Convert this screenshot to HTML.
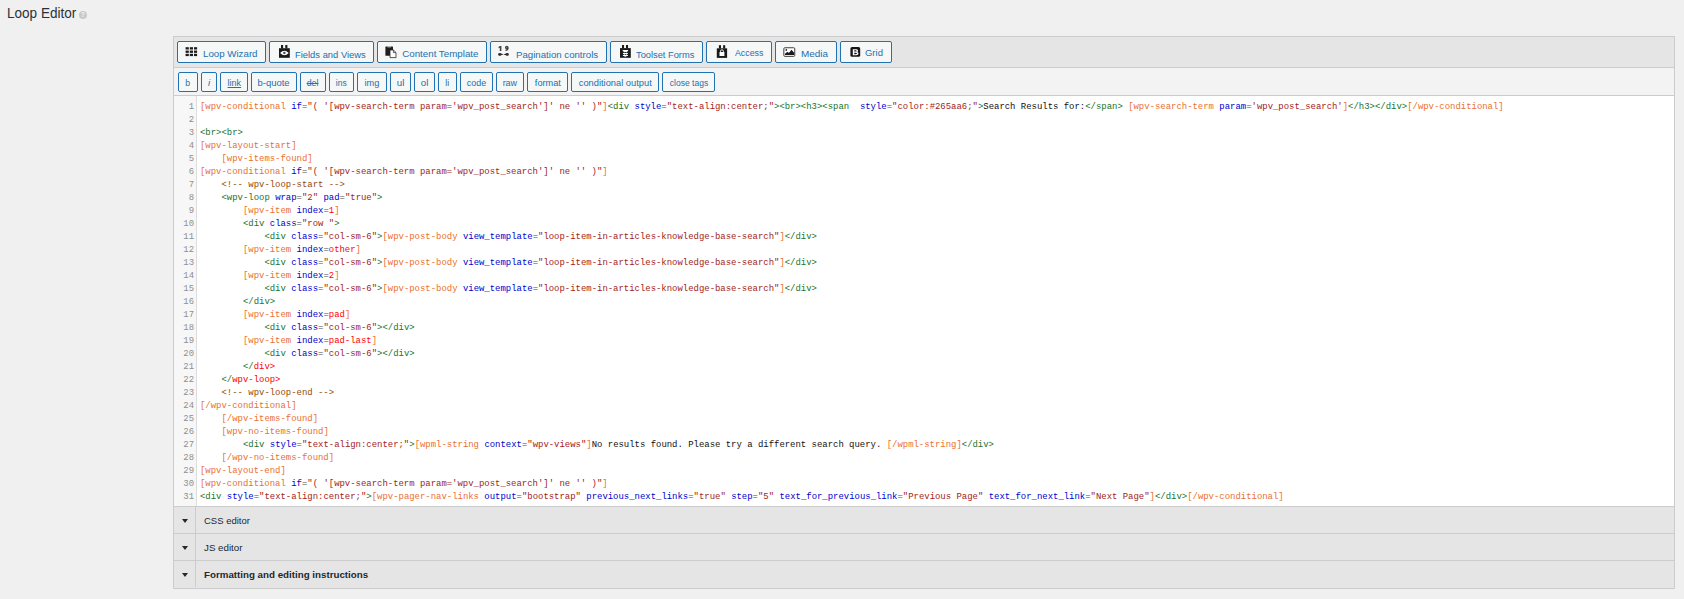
<!DOCTYPE html>
<html>
<head>
<meta charset="utf-8">
<title>Loop Editor</title>
<style>
*{box-sizing:border-box;margin:0;padding:0}
html,body{width:1684px;height:599px;overflow:hidden;background:#f0f0f1}
body{position:relative;font-family:"Liberation Sans",sans-serif;color:#23282d;font-size:9.75px}
.abs{position:absolute}
#title{left:7px;top:3.5px;font-size:13.75px;transform:scaleX(0.985);transform-origin:0 50%;line-height:20px;color:#2a3036;white-space:nowrap}
#help{left:79px;top:11px;width:8px;height:8px;border-radius:50%;background:#c9c9c9;color:#f0f0f1;font-size:7px;line-height:8px;text-align:center;font-weight:bold}
#panel{left:173px;top:36px;width:1502px;height:553px;border:1px solid #ccc;background:#e5e5e5}
#tb1{left:0;top:0;width:1500px;height:30px;background:#e5e5e5;border-bottom:0}
#sep1{left:0;top:30px;width:1500px;height:1px;background:#ccc}
#tb2{left:0;top:31px;width:1500px;height:27px;background:#f3f3f3}
#sep2{left:0;top:58px;width:1500px;height:1px;background:#ccc}
#ed{left:0;top:59px;width:1500px;height:410px;background:#fff;overflow:hidden}
#gut{left:0;top:0;width:23px;height:410px;background:#f7f7f7;border-right:1px solid #ddd}
.btn{position:absolute;border:1px solid #2271b1;border-radius:2px;background:#f6f7f7;color:#2271b1;white-space:nowrap;font-size:9.75px}
.b1{top:4px;height:22px}
.b1 .t{position:absolute;top:5px;line-height:12px;transform-origin:0 50%}
.b2{top:35px;height:20px;text-align:center;line-height:20px}
.q{display:inline-block}
.ln{position:absolute;left:0;height:13px;width:1500px;font-family:"Liberation Mono",monospace;font-size:8.947px;line-height:13px;white-space:pre}
.no{position:absolute;left:0;width:20px;text-align:right;color:#8f8f8f}
.tx{position:absolute;left:26px;color:#111}
.sc{color:#ea7030}.at{color:#00c}.st{color:#a21d18}.tg{color:#22722a}.cm{color:#954a08}.er{color:#f00}.eq{color:#4a4a4a}
.row{left:0;width:1500px;height:26px;background:#e5e5e5}
.row .dv{position:absolute;left:21px;top:0;width:1px;height:100%;background:#ccc}
.row .ar{position:absolute;left:7.5px;top:12px;width:0;height:0;border-left:3.7px solid transparent;border-right:3.7px solid transparent;border-top:4.5px solid #23282d}
.row .lb{position:absolute;left:30px;top:1px;line-height:26px;transform-origin:0 50%;color:#23282d;white-space:nowrap}
.hs{left:0;width:1500px;height:1px;background:#ccc}
</style>
</head>
<body>
<div id="title" class="abs">Loop Editor</div>
<div id="help" class="abs">?</div>

<div id="panel" class="abs">
  <div id="tb1" class="abs"></div>
  <div id="sep1" class="abs"></div>
  <div id="tb2" class="abs"></div>
  <div id="sep2" class="abs"></div>

  <!-- toolbar row 1 -->
  <div class="btn b1" style="left:3px;width:89px"><span class="t" id="t1" style="left:25.4px;top:6px;transform:scaleX(0.996)">Loop Wizard</span></div>
  <div class="btn b1" style="left:95px;width:105px"><span class="t" id="t2" style="left:25.2px;top:7px;transform:scaleX(0.962)">Fields and Views</span></div>
  <div class="btn b1" style="left:203px;width:110px"><span class="t" id="t3" style="left:24.2px;top:6px;transform:scaleX(1.000)">Content Template</span></div>
  <div class="btn b1" style="left:316px;width:117px"><span class="t" id="t4" style="left:25px;top:7px;transform:scaleX(0.990)">Pagination controls</span></div>
  <div class="btn b1" style="left:436px;width:93px"><span class="t" id="t5" style="left:24.6px;top:7px;transform:scaleX(0.952)">Toolset Forms</span></div>
  <div class="btn b1" style="left:532px;width:66px"><span class="t" id="t6" style="left:27.7px;top:5px;transform:scaleX(0.903)">Access</span></div>
  <div class="btn b1" style="left:601px;width:62px"><span class="t" id="t7" style="left:25px;top:5.6px;transform:scaleX(1.020)">Media</span></div>
  <div class="btn b1" style="left:666px;width:52px"><span class="t" id="t8" style="left:24.4px;top:5px;transform:scaleX(0.972)">Grid</span></div>

  <!-- quicktags -->
  <div class="btn b2" style="left:4px;width:20px"><span class="q" style="transform:scaleX(0.9)">b</span></div>
  <div class="btn b2" style="left:27px;width:16px"><span class="q" style="transform:scaleX(1)"><i>i</i></span></div>
  <div class="btn b2" style="left:46px;width:28px"><span class="q" style="transform:scaleX(0.92)"><u>link</u></span></div>
  <div class="btn b2" style="left:77px;width:46px"><span class="q" style="transform:scaleX(0.97)">b-quote</span></div>
  <div class="btn b2" style="left:126px;width:26px"><span class="q" style="transform:scaleX(0.9)"><s>del</s></span></div>
  <div class="btn b2" style="left:155px;width:25px"><span class="q" style="transform:scaleX(0.87)">ins</span></div>
  <div class="btn b2" style="left:183px;width:30px"><span class="q" style="transform:scaleX(0.94)">img</span></div>
  <div class="btn b2" style="left:216px;width:21px"><span class="q" style="transform:scaleX(1)">ul</span></div>
  <div class="btn b2" style="left:240px;width:21px"><span class="q" style="transform:scaleX(1)">ol</span></div>
  <div class="btn b2" style="left:264px;width:19px"><span class="q" style="transform:scaleX(0.9)">li</span></div>
  <div class="btn b2" style="left:286px;width:33px"><span class="q" style="transform:scaleX(0.92)">code</span></div>
  <div class="btn b2" style="left:322px;width:28px"><span class="q" style="transform:scaleX(0.92)">raw</span></div>
  <div class="btn b2" style="left:353px;width:41px"><span class="q" style="transform:scaleX(0.94)">format</span></div>
  <div class="btn b2" style="left:397px;width:88px"><span class="q" style="transform:scaleX(0.955)">conditional output</span></div>
  <div class="btn b2" style="left:488px;width:53px"><span class="q" style="transform:scaleX(0.875)">close tags</span></div>

  <div id="ed" class="abs">
    <div id="gut" class="abs"></div>
    <div id="code" class="abs" style="left:0;top:5px">
<div class="ln" style="top:0px"><span class="no">1</span><span class="tx"><span class="sc">[wpv-conditional</span> <span class="at">if</span><span class="eq">=</span><span class="st">"( '[wpv-search-term param='wpv_post_search']' ne '' )"</span><span class="sc">]</span><span class="tg">&lt;div</span> <span class="at">style</span><span class="eq">=</span><span class="st">"text-align:center;"</span><span class="tg">&gt;</span><span class="tg">&lt;br</span><span class="tg">&gt;</span><span class="tg">&lt;h3</span><span class="tg">&gt;</span><span class="tg">&lt;span</span>  <span class="at">style</span><span class="eq">=</span><span class="st">"color:#265aa6;"</span><span class="tg">&gt;</span>Search Results for:<span class="tg">&lt;/span</span><span class="tg">&gt;</span> <span class="sc">[wpv-search-term</span> <span class="at">param</span><span class="eq">=</span><span class="st">'wpv_post_search'</span><span class="sc">]</span><span class="tg">&lt;/h3</span><span class="tg">&gt;</span><span class="tg">&lt;/div</span><span class="tg">&gt;</span><span class="sc">[/wpv-conditional</span><span class="sc">]</span></span></div>
<div class="ln" style="top:13px"><span class="no">2</span><span class="tx"></span></div>
<div class="ln" style="top:26px"><span class="no">3</span><span class="tx"><span class="tg">&lt;br</span><span class="tg">&gt;</span><span class="tg">&lt;br</span><span class="tg">&gt;</span></span></div>
<div class="ln" style="top:39px"><span class="no">4</span><span class="tx"><span class="sc">[wpv-layout-start</span><span class="sc">]</span></span></div>
<div class="ln" style="top:52px"><span class="no">5</span><span class="tx">    <span class="sc">[wpv-items-found</span><span class="sc">]</span></span></div>
<div class="ln" style="top:65px"><span class="no">6</span><span class="tx"><span class="sc">[wpv-conditional</span> <span class="at">if</span><span class="eq">=</span><span class="st">"( '[wpv-search-term param='wpv_post_search']' ne '' )"</span><span class="sc">]</span></span></div>
<div class="ln" style="top:78px"><span class="no">7</span><span class="tx">    <span class="cm">&lt;!-- wpv-loop-start --&gt;</span></span></div>
<div class="ln" style="top:91px"><span class="no">8</span><span class="tx">    <span class="tg">&lt;wpv-loop</span> <span class="at">wrap</span><span class="eq">=</span><span class="st">"2"</span> <span class="at">pad</span><span class="eq">=</span><span class="st">"true"</span><span class="tg">&gt;</span></span></div>
<div class="ln" style="top:104px"><span class="no">9</span><span class="tx">        <span class="sc">[wpv-item</span> <span class="at">index</span><span class="eq">=</span><span class="er">1</span><span class="sc">]</span></span></div>
<div class="ln" style="top:117px"><span class="no">10</span><span class="tx">        <span class="tg">&lt;div</span> <span class="at">class</span><span class="eq">=</span><span class="st">"row "</span><span class="tg">&gt;</span></span></div>
<div class="ln" style="top:130px"><span class="no">11</span><span class="tx">            <span class="tg">&lt;div</span> <span class="at">class</span><span class="eq">=</span><span class="st">"col-sm-6"</span><span class="tg">&gt;</span><span class="sc">[wpv-post-body</span> <span class="at">view_template</span><span class="eq">=</span><span class="st">"loop-item-in-articles-knowledge-base-search"</span><span class="sc">]</span><span class="tg">&lt;/div</span><span class="tg">&gt;</span></span></div>
<div class="ln" style="top:143px"><span class="no">12</span><span class="tx">        <span class="sc">[wpv-item</span> <span class="at">index</span><span class="eq">=</span><span class="er">other</span><span class="sc">]</span></span></div>
<div class="ln" style="top:156px"><span class="no">13</span><span class="tx">            <span class="tg">&lt;div</span> <span class="at">class</span><span class="eq">=</span><span class="st">"col-sm-6"</span><span class="tg">&gt;</span><span class="sc">[wpv-post-body</span> <span class="at">view_template</span><span class="eq">=</span><span class="st">"loop-item-in-articles-knowledge-base-search"</span><span class="sc">]</span><span class="tg">&lt;/div</span><span class="tg">&gt;</span></span></div>
<div class="ln" style="top:169px"><span class="no">14</span><span class="tx">        <span class="sc">[wpv-item</span> <span class="at">index</span><span class="eq">=</span><span class="er">2</span><span class="sc">]</span></span></div>
<div class="ln" style="top:182px"><span class="no">15</span><span class="tx">            <span class="tg">&lt;div</span> <span class="at">class</span><span class="eq">=</span><span class="st">"col-sm-6"</span><span class="tg">&gt;</span><span class="sc">[wpv-post-body</span> <span class="at">view_template</span><span class="eq">=</span><span class="st">"loop-item-in-articles-knowledge-base-search"</span><span class="sc">]</span><span class="tg">&lt;/div</span><span class="tg">&gt;</span></span></div>
<div class="ln" style="top:195px"><span class="no">16</span><span class="tx">        <span class="tg">&lt;/div</span><span class="tg">&gt;</span></span></div>
<div class="ln" style="top:208px"><span class="no">17</span><span class="tx">        <span class="sc">[wpv-item</span> <span class="at">index</span><span class="eq">=</span><span class="er">pad</span><span class="sc">]</span></span></div>
<div class="ln" style="top:221px"><span class="no">18</span><span class="tx">            <span class="tg">&lt;div</span> <span class="at">class</span><span class="eq">=</span><span class="st">"col-sm-6"</span><span class="tg">&gt;</span><span class="tg">&lt;/div</span><span class="tg">&gt;</span></span></div>
<div class="ln" style="top:234px"><span class="no">19</span><span class="tx">        <span class="sc">[wpv-item</span> <span class="at">index</span><span class="eq">=</span><span class="er">pad-last</span><span class="sc">]</span></span></div>
<div class="ln" style="top:247px"><span class="no">20</span><span class="tx">            <span class="tg">&lt;div</span> <span class="at">class</span><span class="eq">=</span><span class="st">"col-sm-6"</span><span class="tg">&gt;</span><span class="tg">&lt;/div</span><span class="tg">&gt;</span></span></div>
<div class="ln" style="top:260px"><span class="no">21</span><span class="tx">        <span class="tg">&lt;/</span><span class="er">div&gt;</span></span></div>
<div class="ln" style="top:273px"><span class="no">22</span><span class="tx">    <span class="tg">&lt;/</span><span class="er">wpv-loop&gt;</span></span></div>
<div class="ln" style="top:286px"><span class="no">23</span><span class="tx">    <span class="cm">&lt;!-- wpv-loop-end --&gt;</span></span></div>
<div class="ln" style="top:299px"><span class="no">24</span><span class="tx"><span class="sc">[/wpv-conditional</span><span class="sc">]</span></span></div>
<div class="ln" style="top:312px"><span class="no">25</span><span class="tx">    <span class="sc">[/wpv-items-found</span><span class="sc">]</span></span></div>
<div class="ln" style="top:325px"><span class="no">26</span><span class="tx">    <span class="sc">[wpv-no-items-found</span><span class="sc">]</span></span></div>
<div class="ln" style="top:338px"><span class="no">27</span><span class="tx">        <span class="tg">&lt;div</span> <span class="at">style</span><span class="eq">=</span><span class="st">"text-align:center;"</span><span class="tg">&gt;</span><span class="sc">[wpml-string</span> <span class="at">context</span><span class="eq">=</span><span class="st">"wpv-views"</span><span class="sc">]</span>No results found. Please try a different search query. <span class="sc">[/wpml-string</span><span class="sc">]</span><span class="tg">&lt;/div</span><span class="tg">&gt;</span></span></div>
<div class="ln" style="top:351px"><span class="no">28</span><span class="tx">    <span class="sc">[/wpv-no-items-found</span><span class="sc">]</span></span></div>
<div class="ln" style="top:364px"><span class="no">29</span><span class="tx"><span class="sc">[wpv-layout-end</span><span class="sc">]</span></span></div>
<div class="ln" style="top:377px"><span class="no">30</span><span class="tx"><span class="sc">[wpv-conditional</span> <span class="at">if</span><span class="eq">=</span><span class="st">"( '[wpv-search-term param='wpv_post_search']' ne '' )"</span><span class="sc">]</span></span></div>
<div class="ln" style="top:390px"><span class="no">31</span><span class="tx"><span class="tg">&lt;div</span> <span class="at">style</span><span class="eq">=</span><span class="st">"text-align:center;"</span><span class="tg">&gt;</span><span class="sc">[wpv-pager-nav-links</span> <span class="at">output</span><span class="eq">=</span><span class="st">"bootstrap"</span> <span class="at">previous_next_links</span><span class="eq">=</span><span class="st">"true"</span> <span class="at">step</span><span class="eq">=</span><span class="st">"5"</span> <span class="at">text_for_previous_link</span><span class="eq">=</span><span class="st">"Previous Page"</span> <span class="at">text_for_next_link</span><span class="eq">=</span><span class="st">"Next Page"</span><span class="sc">]</span><span class="tg">&lt;/div</span><span class="tg">&gt;</span><span class="sc">[/wpv-conditional</span><span class="sc">]</span></span></div>

    </div>
  </div>

  <div class="hs abs" style="top:469px"></div>
  <div class="row abs" style="top:470px"><div class="ar"></div><div class="dv"></div><div class="lb" style="transform:scaleX(0.975)">CSS editor</div></div>
  <div class="hs abs" style="top:496px"></div>
  <div class="row abs" style="top:497px"><div class="ar"></div><div class="dv"></div><div class="lb">JS editor</div></div>
  <div class="hs abs" style="top:523px"></div>
  <div class="row abs" style="top:524px;height:27px"><div class="ar"></div><div class="dv" style="height:26px"></div><div class="lb" style="font-weight:bold">Formatting and editing instructions</div></div>
</div>
<svg class="abs" id="icons" style="left:0;top:0" width="1684" height="599" viewBox="0 0 1684 599">
  <!-- Loop Wizard: 3x3 grid -->
  <g fill="#1b1b1b">
    <rect x="185.6" y="47.2" width="3.2" height="2.3"/><rect x="189.8" y="47.2" width="3.2" height="2.3"/><rect x="194" y="47.2" width="3.1" height="2.3"/>
    <rect x="185.6" y="50.55" width="3.2" height="2.3"/><rect x="189.8" y="50.55" width="3.2" height="2.3"/><rect x="194" y="50.55" width="3.1" height="2.3"/>
    <rect x="185.6" y="53.8" width="3.2" height="2.3"/><rect x="189.8" y="53.8" width="3.2" height="2.3"/><rect x="194" y="53.8" width="3.1" height="2.3"/>
  </g>
  <!-- Fields and Views: toolset plug + eye -->
  <g id="plug1">
    <rect x="279" y="48.2" width="10.8" height="9.6" fill="#1a1a1a"/>
    <rect x="281" y="45" width="2.1" height="3.4" fill="#1a1a1a"/><rect x="285.3" y="45" width="2.1" height="3.4" fill="#1a1a1a"/>
    <path d="M280.1 53 Q284.4 48.5 288.7 53 Q284.4 57.5 280.1 53Z" fill="#fff"/>
    <circle cx="284.4" cy="53" r="1.15" fill="#1a1a1a"/><circle cx="284.4" cy="53" r="0.4" fill="#fff"/>
  </g>
  <!-- Content Template: paste -->
  <g>
    <rect x="385.4" y="46.6" width="7.6" height="9.2" rx="0.6" fill="#1f1f1f"/>
    <rect x="387.4" y="46.1" width="3.6" height="1.3" fill="#bbb"/>
    <path d="M390 50 h3.4 l2.6 2.6 v5 h-6 z" fill="#fff" stroke="#2a2a2a" stroke-width="0.8" stroke-linejoin="round"/>
    <path d="M393.4 50 v2.6 h2.6" fill="none" stroke="#2a2a2a" stroke-width="0.7"/>
  </g>
  <!-- Pagination controls: 1 9 with arrows -->
  <g fill="#454545">
    <path d="M499.8 45.9 h1.6 v5 h-1.65 v-3.2 l-1.2 0.5 v-1.3 z"/>
    <circle cx="506.75" cy="47.6" r="1.1" fill="none" stroke="#454545" stroke-width="1.45"/>
    <path d="M507.9 47.7 C508 49.8 507.1 50.4 505.5 50.3" fill="none" stroke="#454545" stroke-width="1.4"/>
  </g>
  <g fill="#2e2e2e">
    <circle cx="499.55" cy="54.4" r="1.4"/><path d="M499.6 53.05 L503.3 54.2 v0.4 L499.6 55.75 Z"/>
    <circle cx="507.4" cy="54.4" r="1.4"/><path d="M507.35 53.05 L503.7 54.2 v0.4 L507.35 55.75 Z"/>
  </g>
  <!-- Toolset Forms: plug + screw -->
  <g>
    <rect x="620" y="48.1" width="10.8" height="9.7" fill="#1a1a1a"/>
    <rect x="622" y="45" width="2.05" height="3.4" fill="#1a1a1a"/><rect x="626" y="45" width="2.05" height="3.4" fill="#1a1a1a"/>
    <path d="M622.7 50 h5.4 v1 l-1.6 1.1 h-2.2 l-1.6 -1.1 z" fill="#fff"/>
    <path d="M622.9 53.05 h5 v0.85 h-5 z M622.9 55.05 h5 v0.85 h-5 z" fill="#fff"/>
    <path d="M623.6 52.2 L627.2 55.2 M627.2 52.2 L623.6 55.2 M623.8 54.4 L626.4 56.6 M627 54.4 L624.4 56.6" stroke="#fff" stroke-width="0.55" fill="none"/>
    <path d="M624.5 56.3 h1.8 l-0.9 0.8 z" fill="#fff"/>
  </g>
  <!-- Access: plug + lock -->
  <g>
    <rect x="716.8" y="48.3" width="10.3" height="9.6" fill="#1a1a1a"/>
    <rect x="718.9" y="45.2" width="2.1" height="3.3" fill="#1a1a1a"/><rect x="723.1" y="45.2" width="2.1" height="3.3" fill="#1a1a1a"/>
    <rect x="719.5" y="52" width="4.9" height="4" fill="#fff"/>
    <path d="M720.5 52.2 v-1 a1.45 1.45 0 0 1 2.9 0 v1" fill="none" stroke="#fff" stroke-width="0.9"/>
  </g>
  <!-- Media: picture -->
  <g>
    <rect x="783.85" y="47.75" width="10.9" height="8.6" rx="1" fill="#fff" stroke="#3c3c3c" stroke-width="1"/>
    <path d="M785 55.1 L785 53.7 L787.5 51.7 L788.9 52.9 L791.5 49.7 L794.1 52.8 L794.1 55.1 Z" fill="#1a1a1a"/>
    <circle cx="786.3" cy="49.9" r="0.85" fill="#1a1a1a"/>
  </g>
  <!-- Grid: bootstrap B -->
  <g>
    <rect x="850.4" y="47.1" width="9.8" height="9.7" rx="1.6" fill="#151515"/>
    <path fill="#fff" fill-rule="evenodd" d="M852.8 49.2 h3.2 c1.3 0 2.1 0.6 2.1 1.55 c0 0.65 -0.4 1.1 -1 1.3 c0.8 0.15 1.35 0.7 1.35 1.5 c0 1 -0.85 1.65 -2.25 1.65 h-3.4 z M854.25 50.3 v1.3 h1.5 c0.6 0 0.9 -0.25 0.9 -0.65 c0 -0.4 -0.3 -0.65 -0.9 -0.65 z M854.25 52.65 v1.5 h1.7 c0.65 0 1 -0.25 1 -0.75 c0 -0.5 -0.35 -0.75 -1 -0.75 z"/>
  </g>
</svg>
</body>
</html>
